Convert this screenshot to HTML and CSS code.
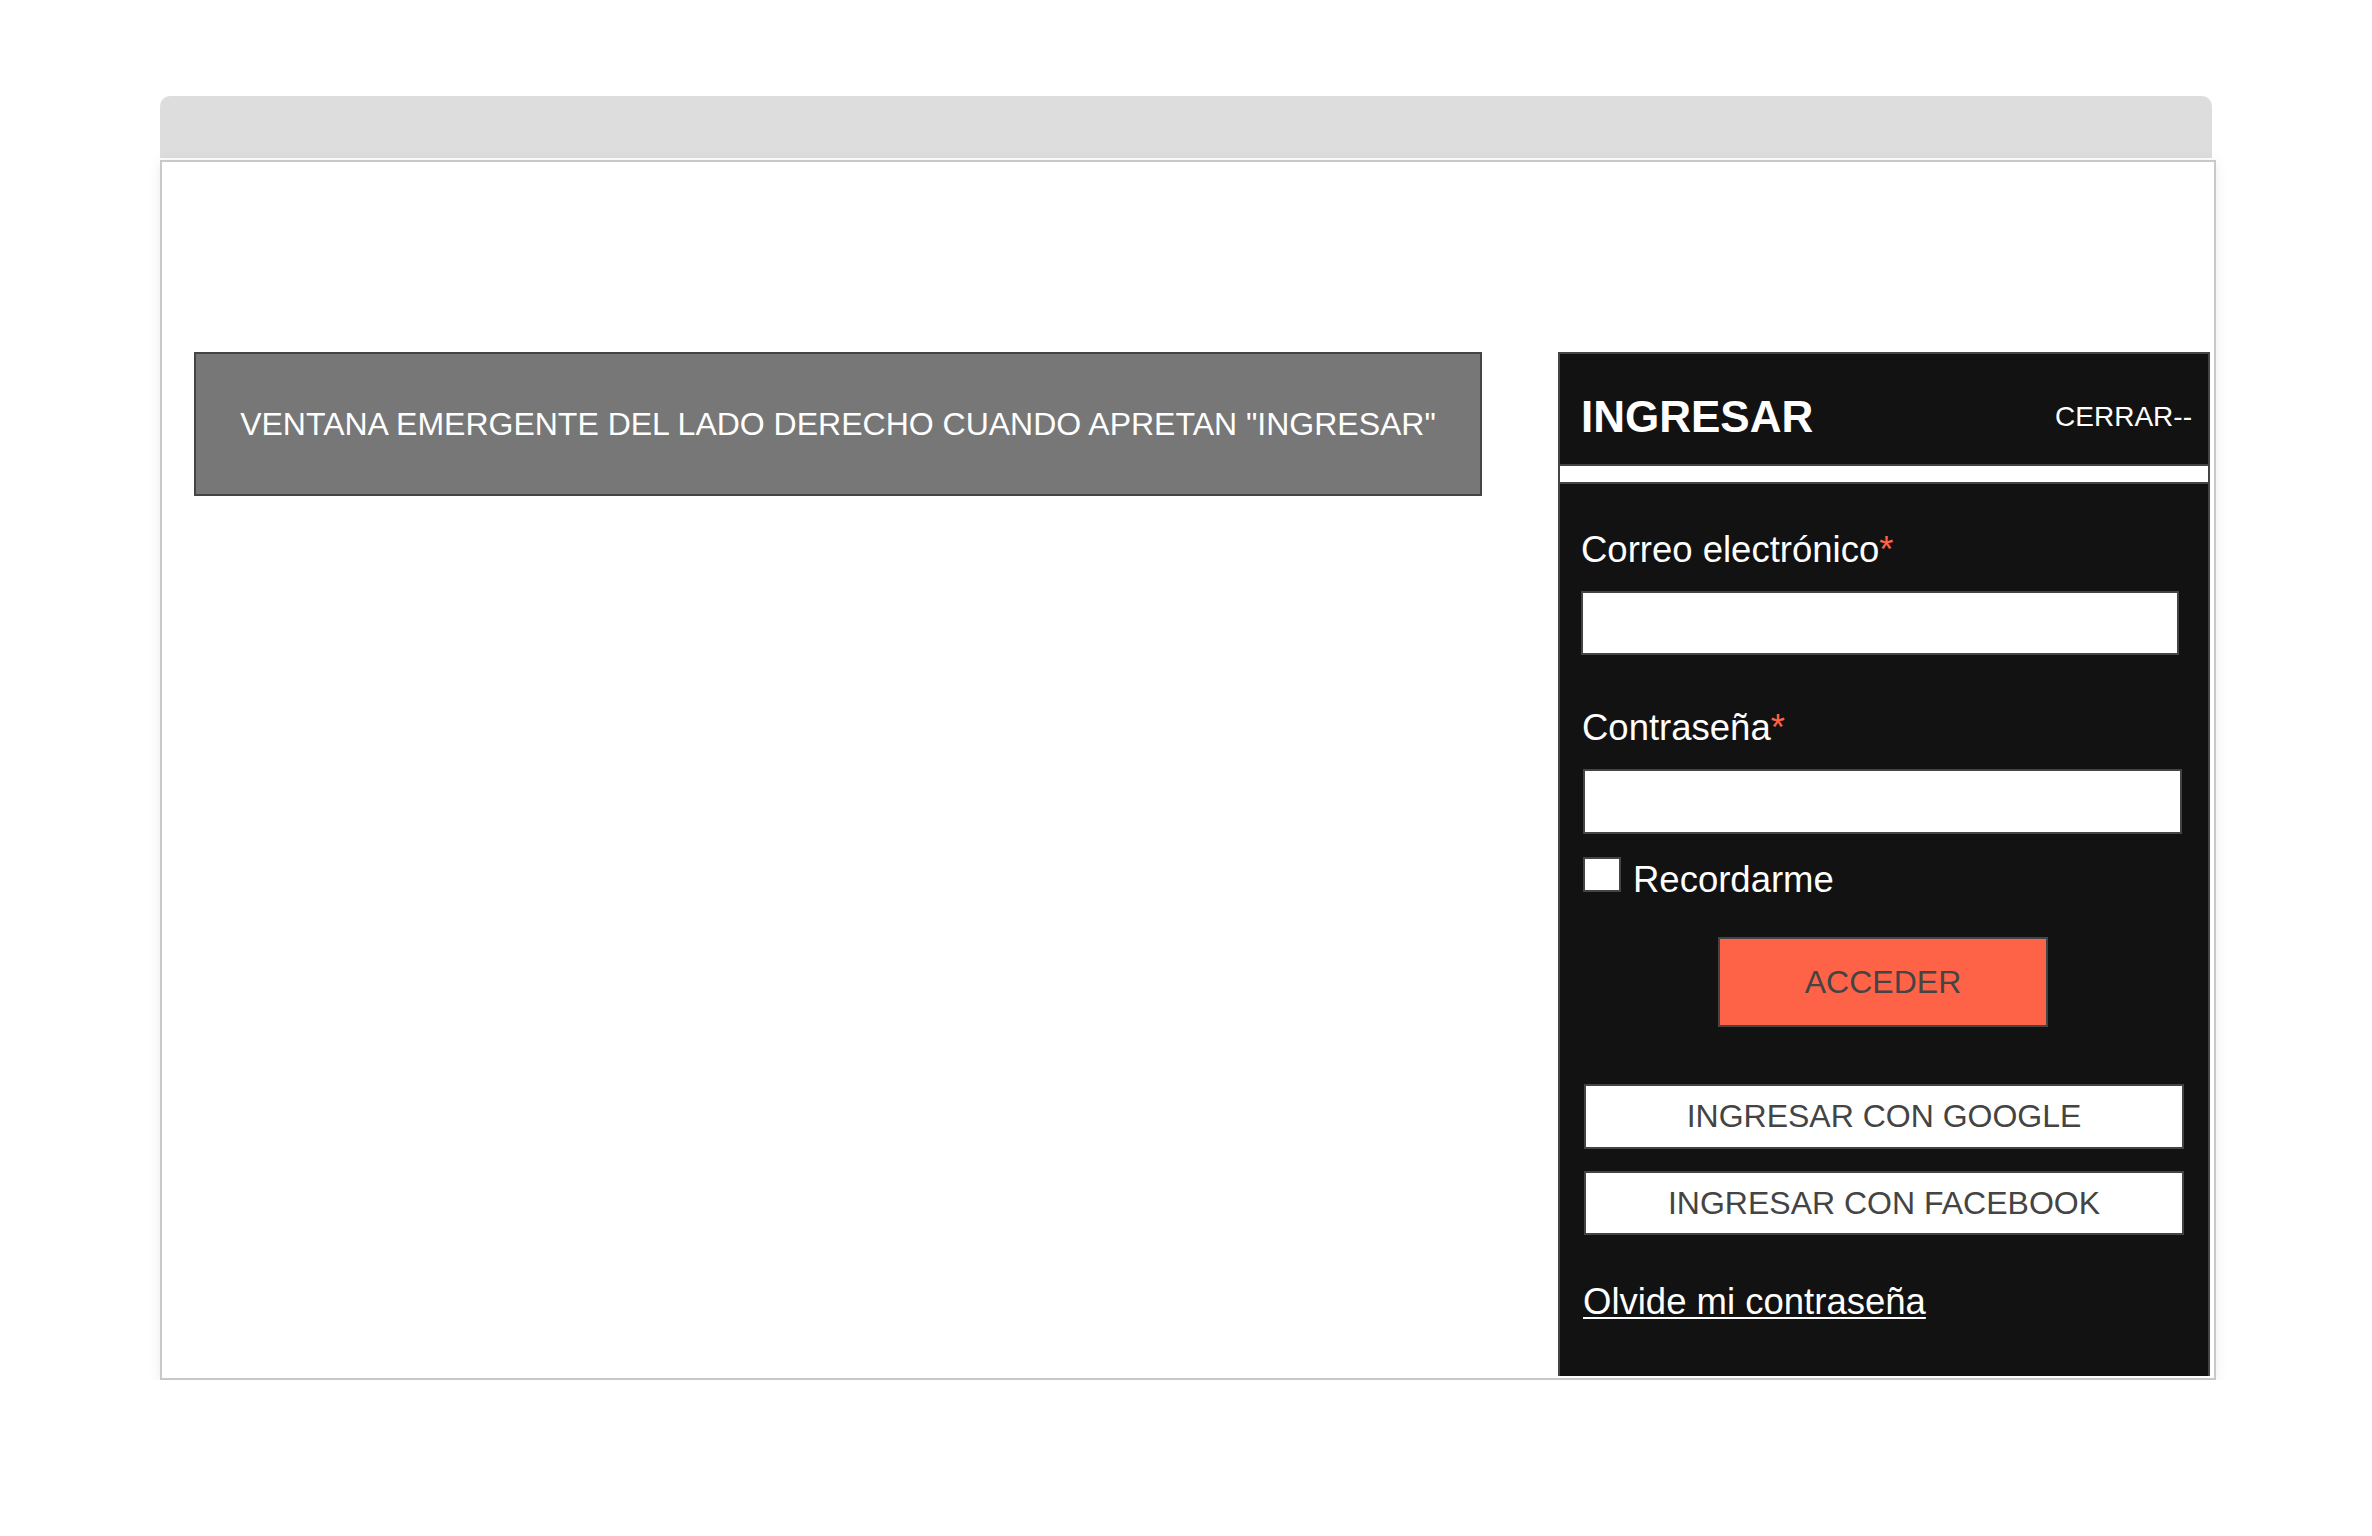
FILE: index.html
```html
<!DOCTYPE html>
<html lang="es">
<head>
<meta charset="utf-8">
<title>Ingresar</title>
<link rel="stylesheet" href="styles.css">
</head>
<body>
<div class="page">
  <div class="window">
    <div class="titlebar"></div>
    <div class="frame">
      <div class="banner">VENTANA EMERGENTE DEL LADO DERECHO CUANDO APRETAN "INGRESAR"</div>
      <aside class="panel">
        <div class="panel-head">
          <h1 class="panel-title">INGRESAR</h1>
          <span class="close">CERRAR--</span>
        </div>
        <div class="stripe"></div>
        <form class="panel-body">
          <label class="label label-email">Correo electrónico<span class="req">*</span></label>
          <div class="input input-email"></div>
          <label class="label label-pass">Contraseña<span class="req">*</span></label>
          <div class="input input-pass"></div>
          <div class="remember"><span class="check"></span><span class="remember-text">Recordarme</span></div>
          <div class="btn-submit">ACCEDER</div>
          <div class="btn-social btn-google">INGRESAR CON GOOGLE</div>
          <div class="btn-social btn-facebook">INGRESAR CON FACEBOOK</div>
          <a class="forgot">Olvide mi contraseña</a>
        </form>
      </aside>
    </div>
  </div>
</div>
</body>
</html>
```

FILE: styles.css
```css
* { box-sizing: border-box; }
html, body { margin: 0; padding: 0; background: #ffffff; }
body { font-family: "Liberation Sans", Arial, sans-serif; }

.page { padding: 96px 0 0 160px; }
.window { width: 2056px; }

.titlebar {
  width: 2052px;
  height: 62px;
  background: #dddddd;
  border-radius: 10px 10px 0 0;
  margin-bottom: 2px;
}

.frame {
  height: 1220px;
  border: 2px solid #c8c8c8;
  background: #ffffff;
  box-shadow: 0 2px 12px rgba(0, 0, 0, 0.08);
  display: flex;
  align-items: flex-start;
  padding: 190px 0 0 32px;
}

.banner {
  width: 1288px;
  height: 144px;
  background: #777777;
  border: 2px solid #444444;
  color: #ffffff;
  font-size: 32px;
  display: flex;
  align-items: center;
  justify-content: center;
}

.panel {
  width: 652px;
  height: 1024px;
  margin-left: 76px;
  background: #121212;
  border: 2px solid #444444;
  border-bottom: none;
  color: #ffffff;
}

.panel-head {
  height: 110px;
  padding: 15px 16px 0 21px;
  display: flex;
  align-items: center;
  justify-content: space-between;
}

.panel-title {
  margin: 0;
  font-size: 44px;
  font-weight: bold;
  line-height: 1;
}

.close {
  font-size: 28px;
  line-height: 1;
}

.stripe {
  height: 20px;
  background: #ffffff;
  border-top: 2px solid #444444;
  border-bottom: 2px solid #444444;
}

.panel-body {
  margin: 0;
  padding: 45px 0 0 21px;
  font-size: 36.5px;
  line-height: 41px;
}

.label { display: block; }
.label-email { margin-left: 0; }
.label-pass { margin-top: 52px; margin-left: 1px; }
.req { color: #ff6347; }

.input {
  background: #ffffff;
  border: 2px solid #444444;
  margin-top: 21px;
}
.input-email { width: 598px; height: 64px; }
.input-pass { width: 599px; height: 65px; margin-left: 2px; }

.remember {
  display: flex;
  align-items: baseline;
  margin-top: 23px;
  margin-left: 2px;
}
.check {
  width: 38px;
  height: 35px;
  background: #ffffff;
  border: 2px solid #444444;
}
.remember-text { margin-left: 12px; }

.btn-submit {
  width: 330px;
  height: 90px;
  margin: 37px 0 0 137px;
  background: #ff6347;
  border: 2px solid #444444;
  color: #444444;
  font-size: 32px;
  display: flex;
  align-items: center;
  justify-content: center;
}

.btn-social {
  width: 600px;
  margin-left: 3px;
  background: #ffffff;
  border: 2px solid #444444;
  color: #444444;
  font-size: 32px;
  display: flex;
  align-items: center;
  justify-content: center;
}
.btn-google { height: 65px; margin-top: 57px; }
.btn-facebook { height: 64px; margin-top: 22px; }

.forgot {
  display: inline-block;
  margin: 46px 0 0 2px;
  color: #ffffff;
  text-decoration: underline;
  text-decoration-thickness: 2px;
  text-underline-offset: 3px;
}
```
